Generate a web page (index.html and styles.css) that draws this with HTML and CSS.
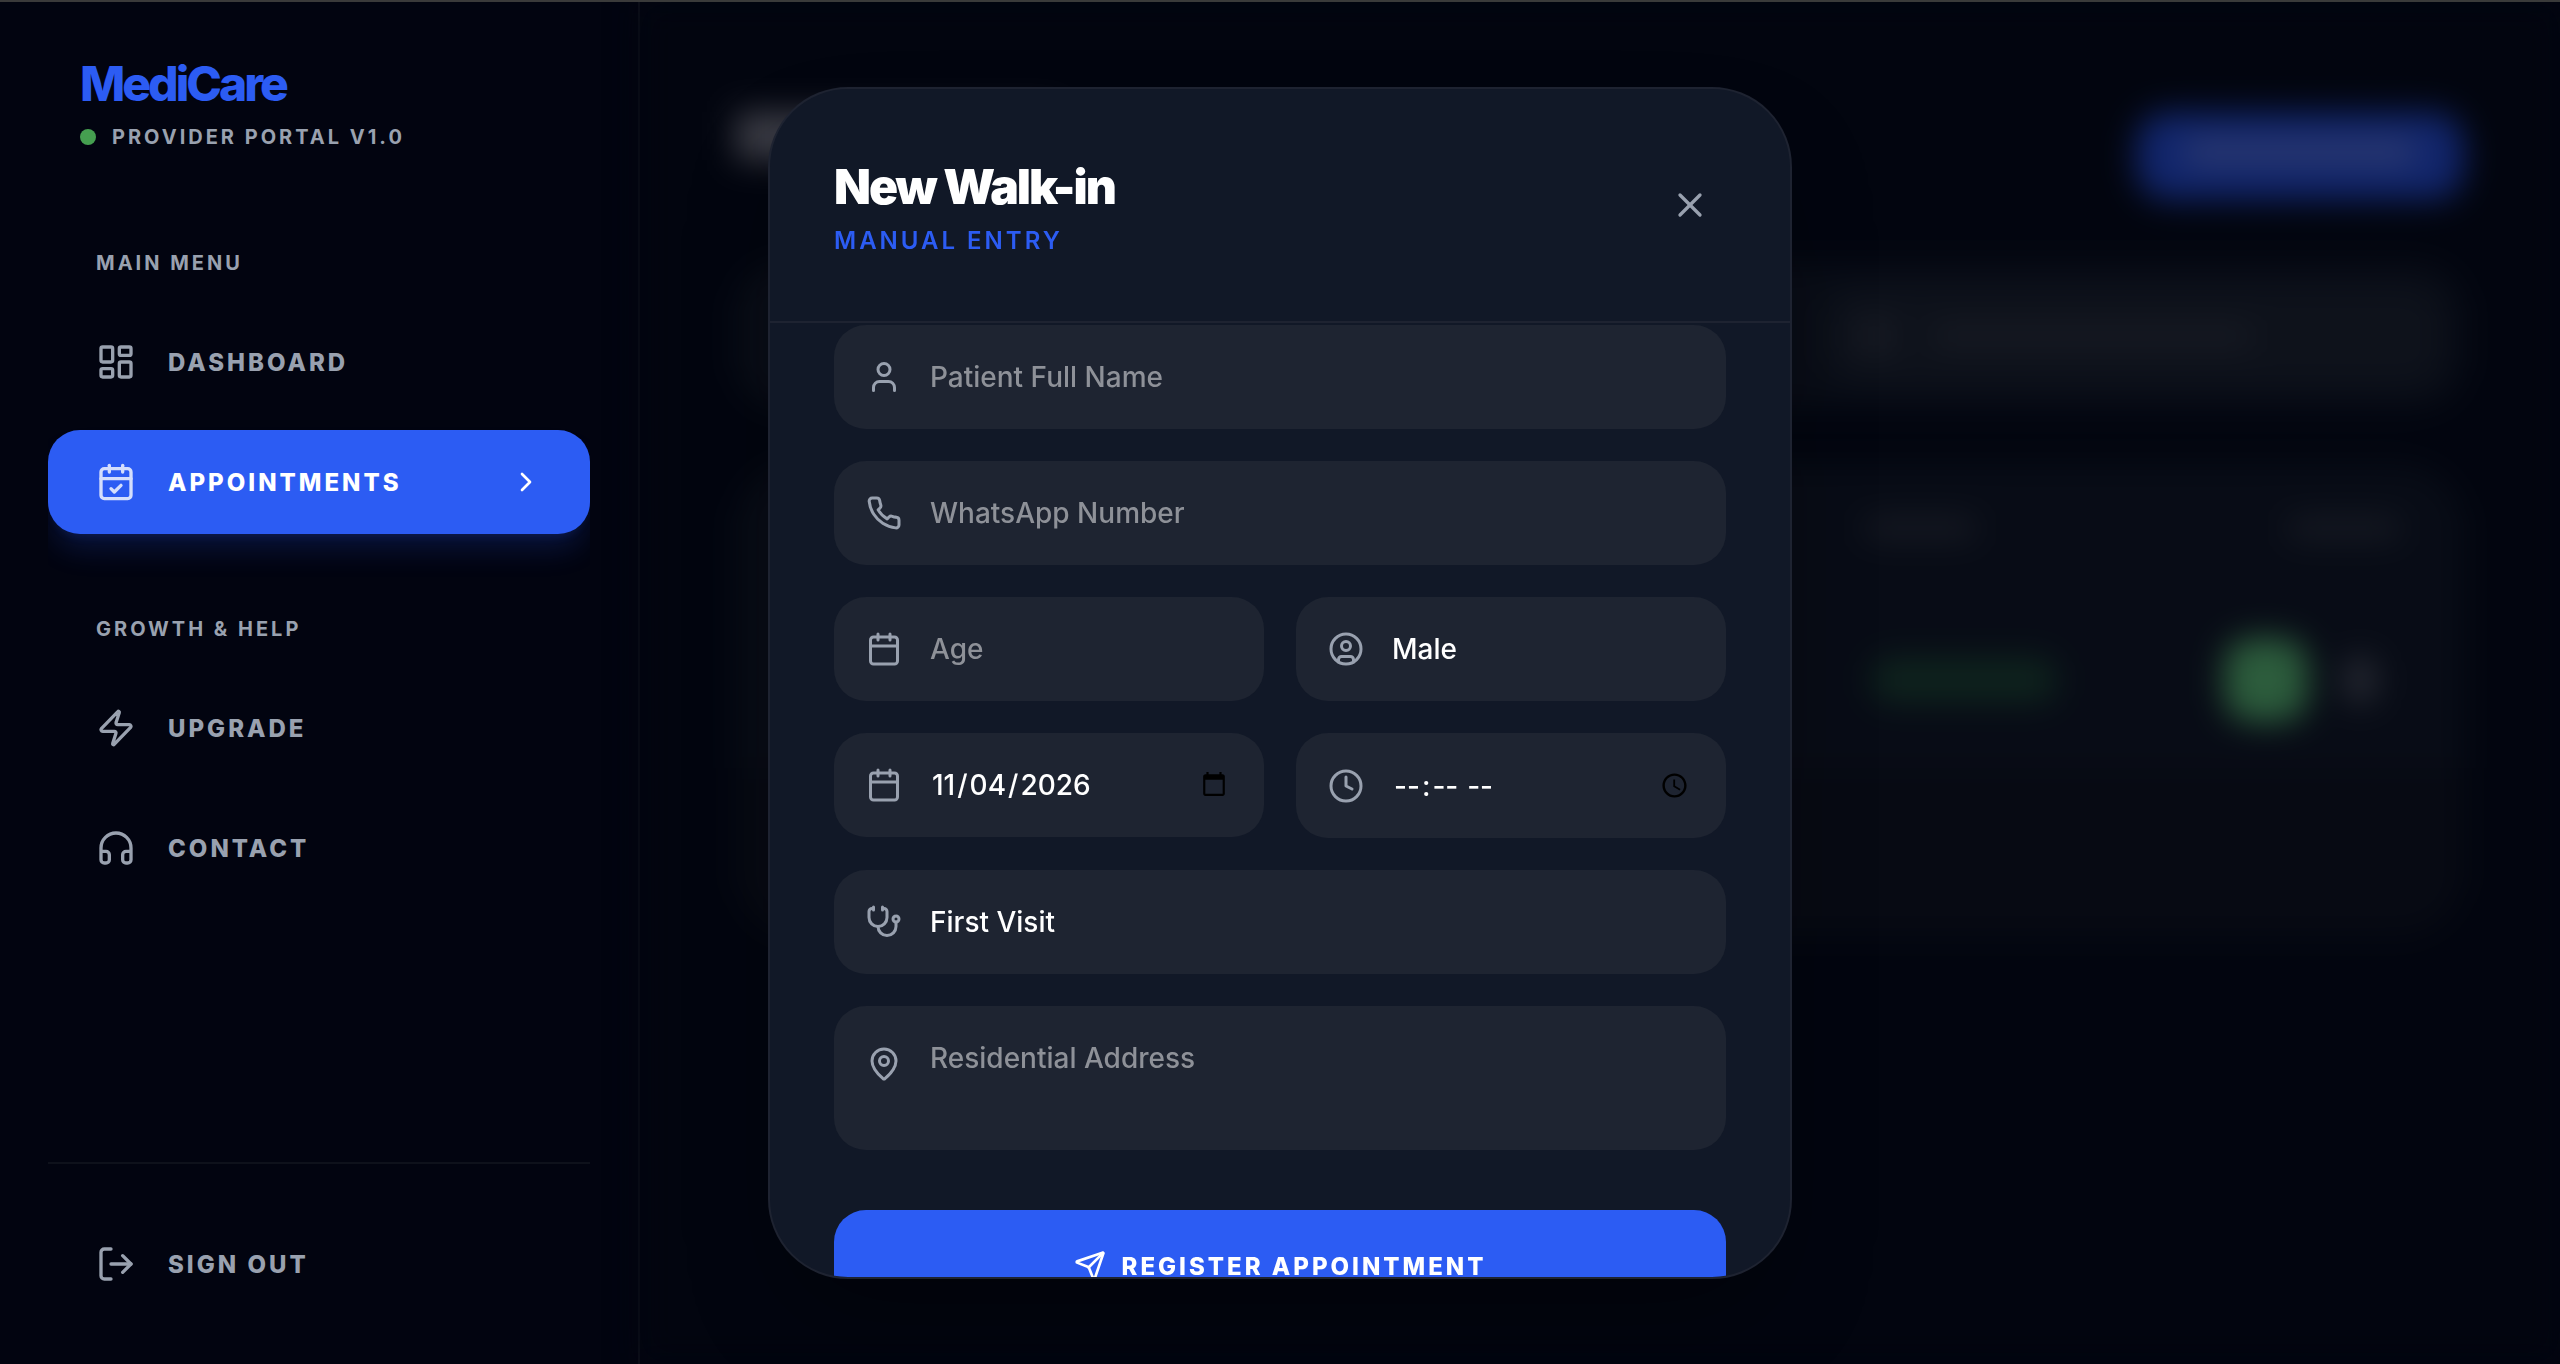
FILE: index.html
```html
<!DOCTYPE html>
<html lang="en">
<head>
    <meta charset="UTF-8">
    <meta name="viewport" content="width=device-width, initial-scale=1.0">
    <title>MediCare - Appointments</title>
    <link rel="stylesheet" href="styles.css">
</head>
<body>
    <aside class="sidebar">
        <div class="brand">
            <h1>MediCare</h1>
            <p><span class="dot"></span>Provider Portal v1.0</p>
        </div>

        <nav class="menu">
            <h2>Main Menu</h2>
            <a href="#dashboard" class="menu-item">
                <svg class="icon" viewBox="0 0 24 24"><rect width="7" height="9" x="3" y="3" rx="1"/><rect width="7" height="5" x="14" y="3" rx="1"/><rect width="7" height="9" x="14" y="12" rx="1"/><rect width="7" height="5" x="3" y="16" rx="1"/></svg>
                <span>Dashboard</span>
            </a>
            <a href="#appointments" class="menu-item active">
                <svg class="icon" viewBox="0 0 24 24"><path d="M8 2v4"/><path d="M16 2v4"/><rect width="18" height="18" x="3" y="4" rx="2"/><path d="M3 10h18"/><path d="m9 16 2 2 4-4"/></svg>
                <span>Appointments</span>
                <svg class="icon chevron" viewBox="0 0 24 24"><path d="m9 18 6-6-6-6"/></svg>
            </a>

            <h2>Growth &amp; Help</h2>
            <a href="#upgrade" class="menu-item">
                <svg class="icon" viewBox="0 0 24 24"><path d="M4 14a1 1 0 0 1-.78-1.63l9.9-10.2a.5.5 0 0 1 .86.46l-1.92 6.02A1 1 0 0 0 13 10h7a1 1 0 0 1 .78 1.63l-9.9 10.2a.5.5 0 0 1-.86-.46l1.92-6.02A1 1 0 0 0 11 14z"/></svg>
                <span>Upgrade</span>
            </a>
            <a href="#contact" class="menu-item">
                <svg class="icon" viewBox="0 0 24 24"><path d="M3 14h3a2 2 0 0 1 2 2v3a2 2 0 0 1-2 2H5a2 2 0 0 1-2-2v-7a9 9 0 0 1 18 0v7a2 2 0 0 1-2 2h-1a2 2 0 0 1-2-2v-3a2 2 0 0 1 2-2h3"/></svg>
                <span>Contact</span>
            </a>
        </nav>

        <div class="sidebar-footer">
            <button type="button" class="menu-item">
                <svg class="icon" viewBox="0 0 24 24"><path d="M9 21H5a2 2 0 0 1-2-2V5a2 2 0 0 1 2-2h4"/><path d="m16 17 5-5-5-5"/><path d="M21 12H9"/></svg>
                <span>Sign Out</span>
            </button>
        </div>
    </aside>

    <!-- Page behind the modal -->
    <main class="content" aria-hidden="true">
        <div class="content-head">
            <div class="ghost-title"></div>
            <div class="ghost-button"><i></i></div>
        </div>
        <div class="ghost-search">
            <div class="ghost-input"><i></i><i></i></div>
        </div>
        <div class="ghost-table">
            <div class="ghost-row ghost-row-head"><i></i><i></i></div>
            <div class="ghost-row">
                <span class="ghost-status"></span>
                <span class="ghost-call"></span>
                <span class="ghost-more"></span>
            </div>
        </div>
    </main>

    <div class="overlay">
        <section class="modal" role="dialog" aria-labelledby="modalTitle">
            <header class="modal-head">
                <div>
                    <h2 id="modalTitle">New Walk-in</h2>
                    <p>Manual Entry</p>
                </div>
                <button type="button" class="close" aria-label="Close">
                    <svg class="icon" viewBox="0 0 24 24"><path d="M18 6 6 18"/><path d="m6 6 12 12"/></svg>
                </button>
            </header>

            <form class="modal-body">
                <label class="field">
                    <svg class="icon" viewBox="0 0 24 24"><path d="M19 21v-2a4 4 0 0 0-4-4H9a4 4 0 0 0-4 4v2"/><circle cx="12" cy="7" r="4"/></svg>
                    <input type="text" name="name" placeholder="Patient Full Name" aria-label="Patient Full Name">
                </label>
                <label class="field">
                    <svg class="icon" viewBox="0 0 24 24"><path d="M22 16.92v3a2 2 0 0 1-2.18 2 19.79 19.79 0 0 1-8.63-3.07 19.5 19.5 0 0 1-6-6 19.79 19.79 0 0 1-3.07-8.67A2 2 0 0 1 4.11 2h3a2 2 0 0 1 2 1.72 12.84 12.84 0 0 0 .7 2.81 2 2 0 0 1-.45 2.11L8.09 9.91a16 16 0 0 0 6 6l1.27-1.27a2 2 0 0 1 2.11-.45 12.84 12.84 0 0 0 2.81.7A2 2 0 0 1 22 16.92z"/></svg>
                    <input type="tel" name="phone" placeholder="WhatsApp Number" aria-label="WhatsApp Number">
                </label>
                <div class="row">
                    <label class="field">
                        <svg class="icon" viewBox="0 0 24 24"><path d="M8 2v4"/><path d="M16 2v4"/><rect width="18" height="18" x="3" y="4" rx="2"/><path d="M3 10h18"/></svg>
                        <input type="text" name="age" inputmode="numeric" placeholder="Age" aria-label="Age">
                    </label>
                    <label class="field">
                        <svg class="icon" viewBox="0 0 24 24"><circle cx="12" cy="12" r="10"/><circle cx="12" cy="10" r="3"/><path d="M7 20.662V19a2 2 0 0 1 2-2h6a2 2 0 0 1 2 2v1.662"/></svg>
                        <select name="gender" aria-label="Gender">
                            <option>Male</option>
                            <option>Female</option>
                            <option>Other</option>
                        </select>
                    </label>
                </div>
                <div class="row">
                    <label class="field">
                        <svg class="icon" viewBox="0 0 24 24"><path d="M8 2v4"/><path d="M16 2v4"/><rect width="18" height="18" x="3" y="4" rx="2"/><path d="M3 10h18"/></svg>
                        <input type="date" name="date" value="2026-11-04" aria-label="Date">
                    </label>
                    <label class="field">
                        <svg class="icon" viewBox="0 0 24 24"><circle cx="12" cy="12" r="10"/><path d="M12 6v6l4 2"/></svg>
                        <input type="time" name="time" aria-label="Time">
                    </label>
                </div>
                <label class="field">
                    <svg class="icon" viewBox="0 0 24 24"><path d="M11 2v2"/><path d="M5 2v2"/><path d="M5 3H4a2 2 0 0 0-2 2v4a6 6 0 0 0 12 0V5a2 2 0 0 0-2-2h-1"/><path d="M8 15a6 6 0 0 0 12 0v-3"/><circle cx="20" cy="10" r="2"/></svg>
                    <select name="visit" aria-label="Visit type">
                        <option>First Visit</option>
                        <option>Follow Up</option>
                    </select>
                </label>
                <label class="field field-area">
                    <svg class="icon" viewBox="0 0 24 24"><path d="M20 10c0 4.993-5.539 10.193-7.399 11.799a1 1 0 0 1-1.202 0C9.539 20.193 4 14.993 4 10a8 8 0 0 1 16 0"/><circle cx="12" cy="10" r="3"/></svg>
                    <textarea name="address" placeholder="Residential Address" aria-label="Residential Address"></textarea>
                </label>
                <button type="submit" class="submit">
                    <svg class="icon" viewBox="0 0 24 24"><path d="M14.536 21.686a.5.5 0 0 0 .937-.024l6.5-19a.496.496 0 0 0-.635-.635l-19 6.5a.5.5 0 0 0-.024.937l7.93 3.18a2 2 0 0 1 1.112 1.11z"/><path d="m21.854 2.147-10.94 10.939"/></svg>
                    <span>Register Appointment</span>
                </button>
            </form>
        </section>
    </div>
</body>
</html>
```
FILE: styles.css
```css
* {
    box-sizing: border-box;
}
body {
    display: flex;
    height: 100vh;
    margin: 0;
    overflow: hidden;
    border-top: 2px solid #3a3a3a;
    background-color: #020410;
    color: #fff;
    font-family: Inter, "Liberation Sans", sans-serif;
}
h1, h2, p {
    margin: 0;
}
button, input, select, textarea {
    font-family: inherit;
}
.icon {
    flex: none;
    width: 36px;
    height: 36px;
    fill: none;
    stroke: currentColor;
    stroke-width: 2;
    stroke-linecap: round;
    stroke-linejoin: round;
}

/* Sidebar */
.sidebar {
    display: flex;
    flex: none;
    flex-direction: column;
    width: 640px;
    padding: 48px;
    border-right: 2px solid #0e111b;
}
.brand {
    padding: 0 32px;
    margin-bottom: 96px;
}
.brand h1 {
    margin-bottom: 4px;
    color: #2c5cf3;
    font-size: 48px;
    font-weight: 800;
    line-height: 68px;
    letter-spacing: -3px;
}
.brand p {
    display: flex;
    align-items: center;
    gap: 16px;
    color: #99a1af;
    font-size: 20px;
    font-weight: 700;
    line-height: 30px;
    letter-spacing: 3px;
    text-transform: uppercase;
}
.dot {
    width: 16px;
    height: 16px;
    border-radius: 50%;
    background-color: #459f50;
}
.menu {
    flex: 1;
    overflow: hidden;
}
.menu h2 {
    margin: 80px 0 32px;
    padding: 0 48px;
    color: #99a1af;
    font-size: 20px;
    font-weight: 700;
    line-height: 30px;
    letter-spacing: 3px;
    text-transform: uppercase;
}
.menu h2:first-child {
    margin-top: 0;
}
.menu-item {
    display: flex;
    align-items: center;
    gap: 32px;
    width: 100%;
    height: 104px;
    margin-bottom: 16px;
    padding: 0 48px;
    border: none;
    border-radius: 32px;
    background: none;
    color: #99a1af;
    font-size: 24px;
    font-weight: 800;
    letter-spacing: 3px;
    text-align: left;
    text-decoration: none;
    text-transform: uppercase;
    cursor: pointer;
}
.menu-item .icon {
    width: 40px;
    height: 40px;
}
.menu-item.active {
    background-color: #2c5cf3;
    box-shadow: 0 20px 30px -6px rgba(44, 92, 243, 0.2), 0 8px 12px -8px rgba(44, 92, 243, 0.2);
    color: #fff;
}
.menu-item.active .icon {
    opacity: 0.8;
}
.menu-item.active .chevron {
    width: 32px;
    height: 32px;
    margin-left: auto;
    opacity: 1;
}
.sidebar-footer {
    padding-top: 48px;
    border-top: 2px solid #0e111b;
}
.sidebar-footer .menu-item {
    margin-bottom: 0;
}

/* Page behind the modal */
.content {
    flex: 1;
    padding: 110px 96px;
    background-color: #02050f;
    filter: blur(16px);
}
.content i {
    display: block;
    border-radius: 8px;
}
.content-head {
    display: flex;
    justify-content: space-between;
    margin-bottom: 64px;
}
.ghost-title {
    width: 320px;
    height: 48px;
    background-color: #3c3d46;
}
.ghost-button {
    width: 328px;
    height: 88px;
    padding: 28px 48px;
    border-radius: 32px;
    background-color: #11256b;
}
.ghost-button i {
    height: 24px;
    background-color: #2c3a70;
}
.ghost-search {
    margin-bottom: 56px;
    padding: 24px;
    border-radius: 48px;
    background-color: #090d17;
}
.ghost-input {
    display: flex;
    align-items: center;
    gap: 40px;
    height: 96px;
    margin-left: 1064px;
    padding: 0 32px;
    border-radius: 32px;
    background-color: #0e121b;
}
.ghost-input i {
    width: 36px;
    height: 36px;
    background-color: #181b24;
}
.ghost-input i + i {
    width: 320px;
    height: 20px;
}
.ghost-table {
    height: 472px;
    border-radius: 64px;
    background-color: #070a13;
}
.ghost-row {
    display: flex;
    align-items: center;
    height: 176px;
    padding: 0 88px 0 1136px;
    background-color: #080c16;
}
.ghost-row-head {
    justify-content: space-between;
    height: 128px;
    padding: 0 64px 0 1128px;
    border-radius: 64px 64px 0 0;
}
.ghost-row-head i {
    width: 112px;
    height: 20px;
    background-color: #181b24;
}
.ghost-status {
    width: 184px;
    height: 44px;
    margin-right: auto;
    border-radius: 16px;
    background-color: #0e231d;
}
.ghost-call {
    width: 84px;
    height: 84px;
    margin-right: 36px;
    border-radius: 28px;
    background-color: #2c5c3c;
}
.ghost-more {
    width: 32px;
    height: 48px;
    border-radius: 16px;
    background-color: #262932;
}

/* Modal */
.overlay {
    position: fixed;
    inset: 2px 0 0;
    display: flex;
    justify-content: center;
    padding: 85px 32px;
}
.modal {
    display: flex;
    flex-direction: column;
    width: 100%;
    max-width: 1024px;
    overflow: hidden;
    border: 2px solid #1e2331;
    border-radius: 80px;
    background-color: #111827;
    box-shadow: 0 50px 100px -24px rgba(0, 0, 0, 0.4);
}
.modal-head {
    display: flex;
    flex: none;
    align-items: center;
    justify-content: space-between;
    padding: 64px;
    border-bottom: 2px solid #1e2331;
}
.modal-head h2 {
    margin-bottom: 4px;
    font-size: 48px;
    font-weight: 900;
    line-height: 68px;
    letter-spacing: -2px;
}
.modal-head p {
    color: #2c5cf3;
    font-size: 24px;
    font-weight: 600;
    line-height: 32px;
    letter-spacing: 3px;
    text-transform: uppercase;
}
.close {
    display: flex;
    padding: 16px;
    border: none;
    background: none;
    color: #99a1af;
    cursor: pointer;
}
.close .icon {
    width: 40px;
    height: 40px;
}
.modal-body {
    display: flex;
    flex: 1;
    flex-direction: column;
    gap: 32px;
    min-height: 0;
    padding: 2px 64px 64px;
    overflow-y: auto;
    scrollbar-width: none;
}
.row {
    display: grid;
    grid-template-columns: repeat(2, minmax(0, 1fr));
    align-items: start;
    gap: 32px;
}
.field {
    display: flex;
    flex: none;
    align-items: center;
    gap: 28px;
    padding: 30px 32px;
    border-radius: 32px;
    background-color: #1e2431;
    color: #99a1af;
}
.field input, .field select, .field textarea {
    flex: 1;
    min-width: 0;
    height: 44px;
    padding: 0;
    border: none;
    outline: none;
    background: none;
    color: #fff;
    font-size: 28px;
    font-weight: 500;
    line-height: 40px;
    appearance: none;
}
.field input[type="time"] {
    height: 45px;
}
.field input::placeholder, .field textarea::placeholder {
    color: #8e9198;
}
/* Date and time parts */
::-webkit-datetime-edit-month-field,
::-webkit-datetime-edit-day-field,
::-webkit-datetime-edit-year-field,
::-webkit-datetime-edit-hour-field,
::-webkit-datetime-edit-minute-field,
::-webkit-datetime-edit-ampm-field {
    padding: 0 2px;
}
::-webkit-calendar-picker-indicator {
    margin-right: 2px;
}
.field-area {
    align-items: flex-start;
    padding: 32px;
}
.field-area .icon {
    margin-top: 8px;
}
.field textarea {
    height: 80px;
    resize: none;
}
.submit {
    display: flex;
    flex: none;
    align-items: center;
    justify-content: center;
    gap: 16px;
    height: 112px;
    margin-top: 28px;
    border: none;
    border-radius: 32px;
    background-color: #2c5cf3;
    color: #fff;
    font-size: 24px;
    font-weight: 800;
    letter-spacing: 3px;
    text-transform: uppercase;
    cursor: pointer;
}
.submit .icon {
    width: 32px;
    height: 32px;
}
```
